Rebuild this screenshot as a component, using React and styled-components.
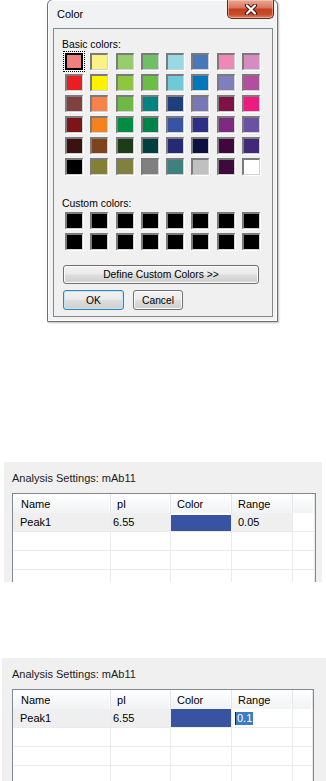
import styled, { createGlobalStyle } from 'styled-components';

const GlobalStyle = createGlobalStyle`
  html, body {
    margin: 0;
    padding: 0;
    background: #fff;
  }
  body {
    font-family: "Liberation Sans", Arial, sans-serif;
    color: #000;
  }
`;

const basicColors = [
  ['#f08080', '#faf283', '#97cc6f', '#6ec066', '#98d9e4', '#4877bb', '#ef88b7', '#d48cc1'],
  ['#ec1c24', '#fff100', '#8dc63f', '#6abd45', '#6dcad9', '#0078be', '#7f7fbf', '#b24e9f'],
  ['#804040', '#f7824a', '#6cb943', '#008480', '#1d3f7c', '#7878b8', '#7d1245', '#ed1b7f'],
  ['#7c1517', '#f7801f', '#008c44', '#00834a', '#3853a4', '#2e3088', '#7f2a82', '#6b51a1'],
  ['#3b1212', '#7e421c', '#1c3c1a', '#003f40', '#262973', '#0e1040', '#40073e', '#402a78'],
  ['#000000', '#818035', '#80803f', '#808080', '#3f817f', '#c0c0c0', '#3e0a3d', '#ffffff'],
];

const customColors = Array.from({ length: 16 }, () => '#000000');

const Page = styled.div`
  display: flex;
  flex-direction: column;
  align-items: flex-start;
  width: 326px;
  height: 781px;
  overflow: hidden;
`;

/* ---------- colour dialog ---------- */

const Dialog = styled.div`
  box-sizing: border-box;
  width: 231px;
  height: 323px;
  margin: -1px 0 0 47px;
  padding: 0 4px 4px 5px;
  display: flex;
  flex-direction: column;
  border: 1px solid #6f6f6f;
  border-radius: 6px 6px 0 0;
  background: #f1f2f3;
  box-shadow: inset 0 0 0 1px #fdfdfd, 1px 1px 2px rgba(0, 0, 0, 0.25);
`;

const TitleBar = styled.div`
  display: flex;
  justify-content: space-between;
  align-items: flex-start;
  height: 28px;
  flex-shrink: 0;
`;

const Title = styled.span`
  padding: 8px 0 0 4px;
  font-size: 11px;
  line-height: 13px;
  color: #000;
`;

const CloseButton = styled.div`
  box-sizing: border-box;
  width: 47px;
  height: 19px;
  margin-right: -1px;
  display: flex;
  align-items: center;
  justify-content: center;
  border: 1px solid #5e2a20;
  border-top: none;
  border-radius: 0 0 5px 5px;
  background: linear-gradient(#e9a896 0%, #d8785f 42%, #c3401f 52%, #c84a2b 80%, #dc8468 100%);
  box-shadow: inset 0 0 0 1px rgba(255, 220, 200, 0.45);
`;

const Client = styled.div`
  flex: 1;
  padding: 9px 8px 0 8px;
  border: 1px solid #878787;
  background: #f0f0f0;
  display: flex;
  flex-direction: column;
  align-items: flex-start;
`;

const Label = styled.div`
  font-size: 10.4px;
  line-height: 13px;
  color: #000;
  margin-top: ${p => p.$gap || 0}px;
`;

const SwatchGrid = styled.div`
  display: grid;
  grid-template-columns: repeat(8, 18px);
  grid-auto-rows: 17px;
  column-gap: 7.25px;
  row-gap: 4px;
  margin: 2px 0 0 3px;
`;

const Swatch = styled.div`
  box-sizing: border-box;
  width: 18px;
  height: 17px;
  background: ${p => p.$color};
  border-style: solid;
  border-width: 2px 1px 1px 2px;
  border-color: #7b7b7b #d2d2d2 #d2d2d2 #7b7b7b;
  box-shadow: 1px 1px 0 #ffffff;
  ${p =>
    p.$selected &&
    `
    border: 2px solid #000;
    outline: 1px dotted #000;
    outline-offset: 1px;
  `}
`;

const DialogButton = styled.button`
  box-sizing: border-box;
  width: ${p => p.$width}px;
  height: ${p => p.$height || 20}px;
  padding: 0;
  font-family: "Liberation Sans", Arial, sans-serif;
  font-size: 10.3px;
  color: #000;
  border: 1px solid ${p => (p.$primary ? '#3c7fb1' : '#707070')};
  border-radius: 3px;
  background: linear-gradient(#f2f2f2 0%, #ebebeb 48%, #dddddd 52%, #cfcfcf 100%);
  box-shadow: inset 0 0 0 1px ${p => (p.$primary ? '#bfe6f8' : '#fbfbfb')};
`;

const WideButton = styled(DialogButton)`
  margin: 15px 0 0 1px;
`;

const ButtonRow = styled.div`
  display: flex;
  gap: 9px;
  margin: 6px 0 0 1px;
`;

const CloseIcon = () => (
  <svg width="14" height="11" viewBox="0 0 14 11">
    <path d="M3 1.5 L11 9.5 M11 1.5 L3 9.5" stroke="#3d1a12" strokeWidth="4.2" strokeLinecap="round" />
    <path d="M3 1.5 L11 9.5 M11 1.5 L3 9.5" stroke="#ffffff" strokeWidth="2.2" strokeLinecap="round" />
  </svg>
);

const ColorDialog = () => (
  <Dialog>
    <TitleBar>
      <Title>Color</Title>
      <CloseButton>
        <CloseIcon />
      </CloseButton>
    </TitleBar>
    <Client>
      <Label>Basic colors:</Label>
      <SwatchGrid>
        {basicColors.flat().map((c, i) => (
          <Swatch key={i} $color={c} $selected={i === 0} />
        ))}
      </SwatchGrid>
      <Label $gap={22}>Custom colors:</Label>
      <SwatchGrid>
        {customColors.map((c, i) => (
          <Swatch key={i} $color={c} />
        ))}
      </SwatchGrid>
      <WideButton $width={196} $height={19}>
        Define Custom Colors &gt;&gt;
      </WideButton>
      <ButtonRow>
        <DialogButton $width={61} $primary>
          OK
        </DialogButton>
        <DialogButton $width={50}>Cancel</DialogButton>
      </ButtonRow>
    </Client>
  </Dialog>
);

/* ---------- analysis settings panels ---------- */

const Panel = styled.div`
  box-sizing: border-box;
  width: ${p => p.$width}px;
  height: ${p => p.$height}px;
  margin: ${p => p.$top}px 0 0 ${p => p.$left}px;
  padding: 9px ${p => p.$padR}px 0 ${p => p.$padL}px;
  background: #f0f0f0;
  overflow: hidden;
  display: flex;
  flex-direction: column;
`;

const PanelTitle = styled.div`
  font-size: 11px;
  line-height: 14px;
  color: #1b1b1b;
`;

const Table = styled.div`
  margin-top: 8px;
  border: 1px solid #828790;
  background: #fff;
  display: grid;
  grid-template-columns: 98px 60px 61px 61px 1fr;
  grid-auto-rows: 19px;
  font-size: 11px;
  flex-shrink: 0;
`;

const HeadCell = styled.div`
  height: 21px;
  box-sizing: border-box;
  padding-left: ${p => p.$pad}px;
  display: flex;
  align-items: center;
  background: linear-gradient(#ffffff 0%, #f7f8f9 50%, #f1f2f4 100%);
  border-bottom: 1px solid #e3e4e6;
  border-right: 1px solid #e4e5e7;
  box-shadow: inset -1px 0 0 #ffffff;
  white-space: nowrap;
`;

const Cell = styled.div`
  box-sizing: border-box;
  padding-left: ${p => p.$pad}px;
  display: flex;
  align-items: center;
  border-bottom: 1px solid #ebebeb;
  border-right: 1px solid #ebebeb;
  background: ${p => (p.$shade ? '#efefef' : '#ffffff')};
  white-space: nowrap;
`;

const ColorFill = styled.div`
  flex: 1;
  align-self: stretch;
  margin: ${p => p.$inset}px 0 0 -${p => p.$pad}px;
  background: ${p => p.$color};
`;

const Selected = styled.span`
  display: inline-flex;
  align-items: center;
  height: 13px;
  padding: 0 1px;
  background: #3d7cc4;
  color: #fff;
  border-left: 1px solid #222;
`;

const columns = [
  { title: 'Name', pad: 8, bodyPad: 7 },
  { title: 'pI', pad: 6, bodyPad: 2 },
  { title: 'Color', pad: 6, bodyPad: 6 },
  { title: 'Range', pad: 6, bodyPad: 6 },
  { title: '', pad: 0, bodyPad: 0 },
];

const AnalysisPanel = ({ range, editing, layout }) => {
  const empty = [0, 1, 2];
  return (
    <Panel {...layout}>
      <PanelTitle>Analysis Settings: mAb11</PanelTitle>
      <Table>
        {columns.map((c, i) => (
          <HeadCell key={i} $pad={c.pad}>
            {c.title}
          </HeadCell>
        ))}
        <Cell $pad={7} $shade>Peak1</Cell>
        <Cell $pad={2} $shade>6.55</Cell>
        <Cell $pad={0}>
          <ColorFill $color="#3953a3" $pad={0} $inset={editing ? 0 : 2} />
        </Cell>
        <Cell $pad={editing ? 3 : 6} $shade={!editing}>
          {editing ? <Selected>{range}</Selected> : range}
        </Cell>
        <Cell $pad={0} />
        {empty.map(r =>
          columns.map((c, i) => <Cell key={`${r}-${i}`} $pad={0} />)
        )}
      </Table>
    </Panel>
  );
};

const App = () => (
  <>
    <GlobalStyle />
    <Page>
      <ColorDialog />
      <AnalysisPanel
        range="0.05"
        layout={{ $top: 140, $left: 4, $width: 318, $height: 120, $padL: 8, $padR: 6 }}
      />
      <AnalysisPanel
        range="0.1"
        editing
        layout={{ $top: 76, $left: 2, $width: 324, $height: 123, $padL: 10, $padR: 12 }}
      />
    </Page>
  </>
);

export default App;
